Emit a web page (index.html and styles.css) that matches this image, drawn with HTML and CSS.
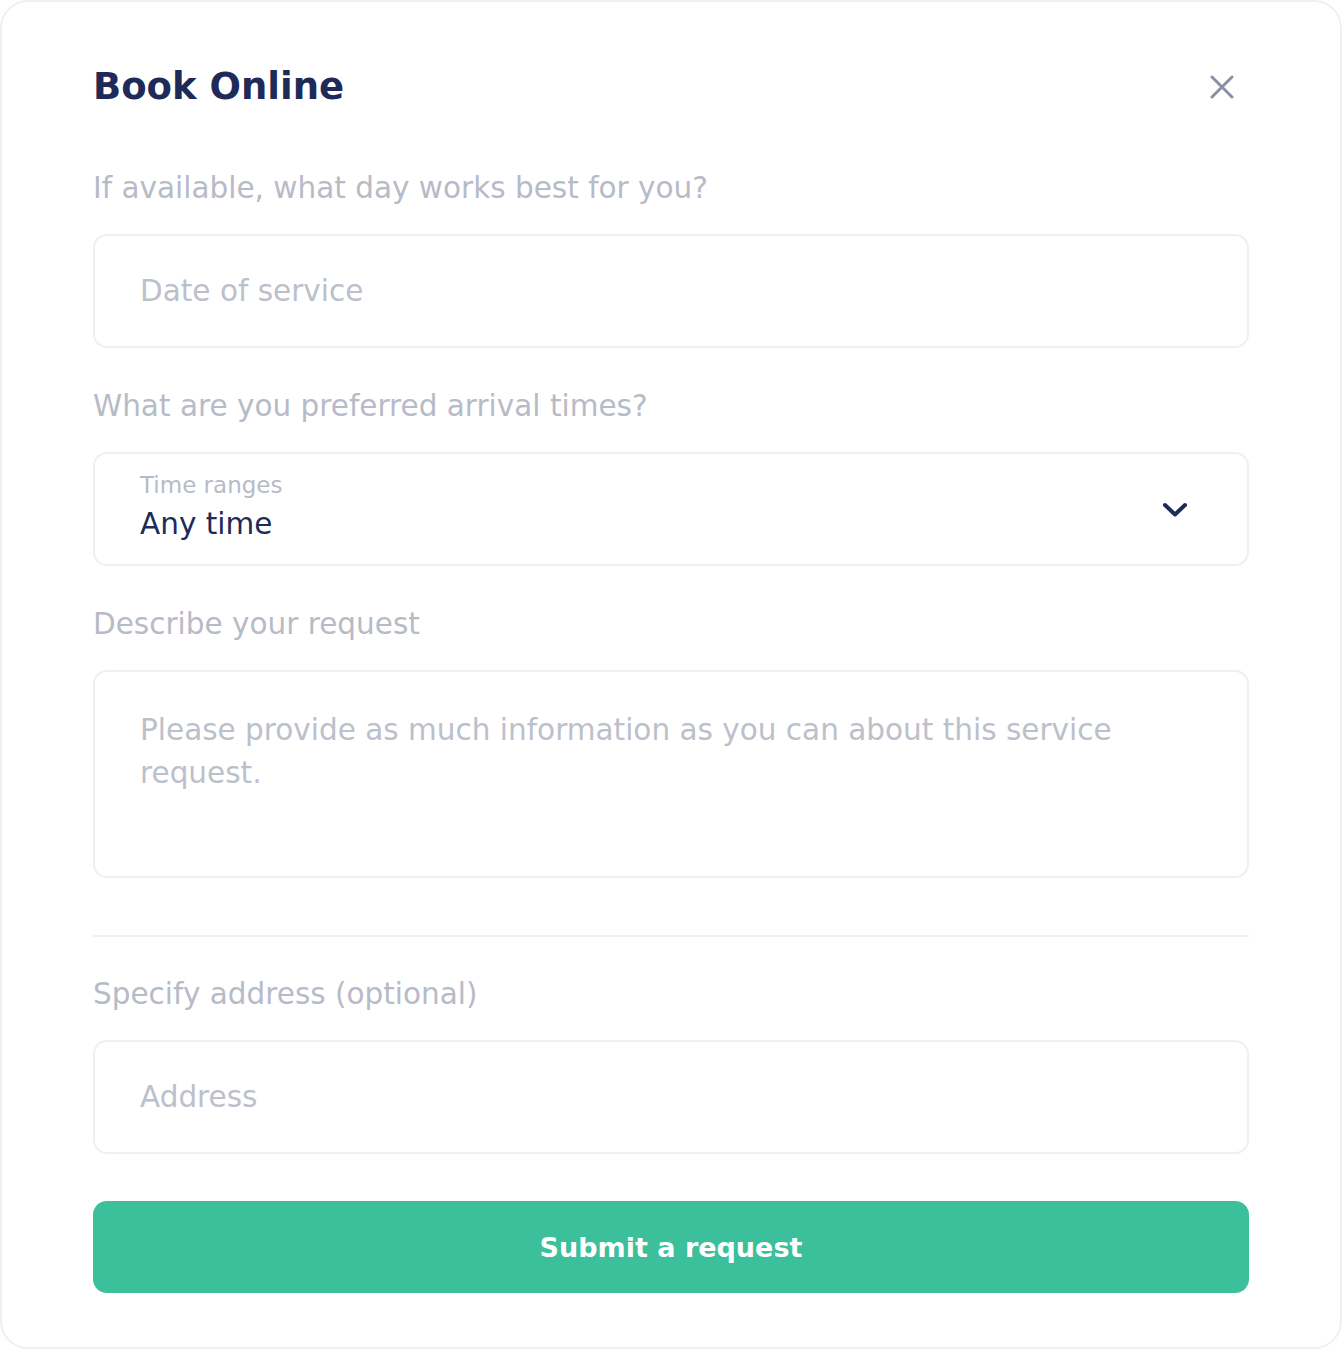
FILE: index.html
```html
<!DOCTYPE html>
<html lang="en">
<head>
    <meta charset="utf-8">
    <title>Book Online</title>
    <link rel="stylesheet" href="styles.css">
</head>
<body>
    <div class="booking-card">
        <div class="card-header">
            <h1 class="card-title">Book Online</h1>
            <button class="close-btn" aria-label="Close">
                <svg width="24" height="24" viewBox="0 0 24 24">
                    <path d="M2 2 L22 22 M22 2 L2 22" stroke="#8a8fa6" stroke-width="3" stroke-linecap="round" fill="none"/>
                </svg>
            </button>
        </div>

        <div class="field">
            <label class="field-label">If available, what day works best for you?</label>
            <div class="input-box">
                <span class="placeholder">Date of service</span>
            </div>
        </div>

        <div class="field">
            <label class="field-label">What are you preferred arrival times?</label>
            <div class="input-box select-box">
                <div class="select-text">
                    <span class="select-caption">Time ranges</span>
                    <span class="select-value">Any time</span>
                </div>
                <svg class="chevron" width="26" height="16" viewBox="0 0 26 16">
                    <path d="M3 3 L13 12.5 L23 3" stroke="#1e2b58" stroke-width="4" stroke-linecap="round" stroke-linejoin="round" fill="none"/>
                </svg>
            </div>
        </div>

        <div class="field">
            <label class="field-label">Describe your request</label>
            <div class="input-box textarea-box">
                <span class="placeholder">Please provide as much information as you can about this service request.</span>
            </div>
        </div>

        <hr class="divider">

        <div class="field">
            <label class="field-label">Specify address (optional)</label>
            <div class="input-box">
                <span class="placeholder">Address</span>
            </div>
        </div>

        <button class="submit-btn">Submit a request</button>
    </div>
</body>
</html>
```

FILE: styles.css
```css
* {
    box-sizing: border-box;
}
body {
    margin: 0;
    background-color: #ffffff;
    font-family: "DejaVu Sans", "Open Sans", sans-serif;
}
.booking-card {
    width: 1342px;
    height: 1349px;
    border: 2px solid #eef0f4;
    border-radius: 28px;
    background-color: #ffffff;
    padding: 57px 91px 0 91px;
    display: flex;
    flex-direction: column;
}
.card-header {
    display: flex;
    justify-content: space-between;
    align-items: center;
    height: 56px;
    margin-bottom: 52px;
}
.card-title {
    margin: 0;
    font-size: 37px;
    line-height: 56px;
    font-weight: 700;
    color: #1e2b58;
}
.close-btn {
    background: none;
    border: none;
    padding: 0;
    margin-right: 15px;
    cursor: pointer;
    display: flex;
}
.field {
    display: flex;
    flex-direction: column;
    margin-bottom: 37px;
}
.field-label {
    font-size: 29.5px;
    line-height: 42px;
    height: 40px;
    color: #b7bbc7;
    margin-bottom: 27px;
}
.input-box {
    height: 114px;
    border: 2px solid #eef0f4;
    border-radius: 14px;
    padding: 0 45px;
    display: flex;
    align-items: center;
}
.placeholder {
    font-size: 29.5px;
    color: #bcc0cb;
    line-height: 43px;
}
.select-box {
    justify-content: space-between;
    padding-right: 59px;
}
.select-text {
    display: flex;
    flex-direction: column;
    margin-bottom: 6px;
}
.select-caption {
    font-size: 23px;
    line-height: 36px;
    color: #b7bbc7;
}
.select-value {
    font-size: 29.5px;
    line-height: 42px;
    color: #1e2b58;
}
.chevron {
    margin-top: 1px;
}
.textarea-box {
    height: 208px;
    align-items: flex-start;
    padding-top: 37px;
    padding-right: 100px;
}
.divider {
    border: none;
    border-top: 2px solid #eef0f4;
    margin: 20px 0 36px 0;
}
.submit-btn {
    margin-top: 10px;
    height: 92px;
    border: none;
    border-radius: 14px;
    background-color: #3bc09b;
    color: #ffffff;
    font-family: "DejaVu Sans", "Open Sans", sans-serif;
    font-size: 27px;
    font-weight: 700;
    cursor: pointer;
}
```
